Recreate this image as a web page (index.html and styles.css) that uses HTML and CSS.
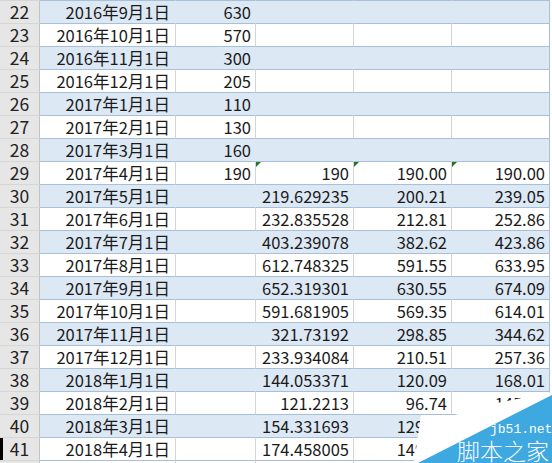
FILE: index.html
```html
<!DOCTYPE html>
<html lang="zh">
<head>
<meta charset="utf-8">
<title>Sheet</title>
<link rel="stylesheet" href="styles.css">
</head>
<body>
<div class="sheet">
  <div class="row blue"><div class="cell h">22</div><div class="cell a">2016年9月1日</div><div class="cell b">630</div><div class="cell c"></div><div class="cell d"></div><div class="cell e"></div></div>
  <div class="row"><div class="cell h">23</div><div class="cell a">2016年10月1日</div><div class="cell b">570</div><div class="cell c"></div><div class="cell d"></div><div class="cell e"></div></div>
  <div class="row blue"><div class="cell h">24</div><div class="cell a">2016年11月1日</div><div class="cell b">300</div><div class="cell c"></div><div class="cell d"></div><div class="cell e"></div></div>
  <div class="row"><div class="cell h">25</div><div class="cell a">2016年12月1日</div><div class="cell b">205</div><div class="cell c"></div><div class="cell d"></div><div class="cell e"></div></div>
  <div class="row blue"><div class="cell h">26</div><div class="cell a">2017年1月1日</div><div class="cell b">110</div><div class="cell c"></div><div class="cell d"></div><div class="cell e"></div></div>
  <div class="row"><div class="cell h">27</div><div class="cell a">2017年2月1日</div><div class="cell b">130</div><div class="cell c"></div><div class="cell d"></div><div class="cell e"></div></div>
  <div class="row blue"><div class="cell h">28</div><div class="cell a">2017年3月1日</div><div class="cell b">160</div><div class="cell c"></div><div class="cell d"></div><div class="cell e"></div></div>
  <div class="row"><div class="cell h">29</div><div class="cell a">2017年4月1日</div><div class="cell b">190</div><div class="cell c flag">190</div><div class="cell d flag">190.00</div><div class="cell e flag">190.00</div></div>
  <div class="row blue"><div class="cell h">30</div><div class="cell a">2017年5月1日</div><div class="cell b"></div><div class="cell c">219.629235</div><div class="cell d">200.21</div><div class="cell e">239.05</div></div>
  <div class="row"><div class="cell h">31</div><div class="cell a">2017年6月1日</div><div class="cell b"></div><div class="cell c">232.835528</div><div class="cell d">212.81</div><div class="cell e">252.86</div></div>
  <div class="row blue"><div class="cell h">32</div><div class="cell a">2017年7月1日</div><div class="cell b"></div><div class="cell c">403.239078</div><div class="cell d">382.62</div><div class="cell e">423.86</div></div>
  <div class="row"><div class="cell h">33</div><div class="cell a">2017年8月1日</div><div class="cell b"></div><div class="cell c">612.748325</div><div class="cell d">591.55</div><div class="cell e">633.95</div></div>
  <div class="row blue"><div class="cell h">34</div><div class="cell a">2017年9月1日</div><div class="cell b"></div><div class="cell c">652.319301</div><div class="cell d">630.55</div><div class="cell e">674.09</div></div>
  <div class="row"><div class="cell h">35</div><div class="cell a">2017年10月1日</div><div class="cell b"></div><div class="cell c">591.681905</div><div class="cell d">569.35</div><div class="cell e">614.01</div></div>
  <div class="row blue"><div class="cell h">36</div><div class="cell a">2017年11月1日</div><div class="cell b"></div><div class="cell c">321.73192</div><div class="cell d">298.85</div><div class="cell e">344.62</div></div>
  <div class="row"><div class="cell h">37</div><div class="cell a">2017年12月1日</div><div class="cell b"></div><div class="cell c">233.934084</div><div class="cell d">210.51</div><div class="cell e">257.36</div></div>
  <div class="row blue"><div class="cell h">38</div><div class="cell a">2018年1月1日</div><div class="cell b"></div><div class="cell c">144.053371</div><div class="cell d">120.09</div><div class="cell e">168.01</div></div>
  <div class="row"><div class="cell h">39</div><div class="cell a">2018年2月1日</div><div class="cell b"></div><div class="cell c">121.2213</div><div class="cell d">96.74</div><div class="cell e">145.70</div></div>
  <div class="row blue"><div class="cell h">40</div><div class="cell a">2018年3月1日</div><div class="cell b"></div><div class="cell c">154.331693</div><div class="cell d">129.92</div><div class="cell e">178.74</div></div>
  <div class="row"><div class="cell h sel">41</div><div class="cell a">2018年4月1日</div><div class="cell b"></div><div class="cell c">174.458005</div><div class="cell d">149.97</div><div class="cell e">198.95</div></div>
  <div class="row"><div class="cell h"></div><div class="cell a"></div><div class="cell b"></div><div class="cell c"></div><div class="cell d"></div><div class="cell e"></div></div>
</div>
<div class="watermark">
  <svg class="wm-shape" width="142" height="103" viewBox="0 0 142 103">
    <polygon points="4,103 11,55 45,55 82,44 142,32 142,103" fill="#ffffff"/>
    <polygon points="8,103 142,35 142,103" fill="#3ea8e0"/>
  </svg>
  <span class="wm-url">jb51.net</span>
  <span class="wm-name">脚本之家</span>
</div>
</body>
</html>
```
FILE: styles.css
```css
html, body {
  margin: 0;
  padding: 0;
  background: #ffffff;
  overflow: hidden;
}
body {
  width: 552px;
  height: 463px;
  position: relative;
  font-family: "Noto Sans CJK SC", "Noto Sans", sans-serif;
  font-size: 16.5px;
  color: #1a1a1a;
}
.sheet {
  display: flex;
  flex-direction: column;
}
.row {
  display: flex;
  height: 23px;
  flex: none;
}
.row:first-child {
  height: 24px;
}
.cell {
  box-sizing: border-box;
  height: 100%;
  display: flex;
  align-items: center;
  justify-content: flex-end;
  padding-right: 4px;
  border-bottom: 1px solid #a8bfda;
  border-right: 1px solid #d4d4d4;
  white-space: nowrap;
  position: relative;
  background: #ffffff;
  line-height: 20px;
}
.row:first-child .cell {
  border-top: 1px solid #a8bfda;
}
.row:first-child .cell.h {
  border-top-color: #d6d6d6;
}
.h {
  width: 40px;
  justify-content: center;
  padding-right: 0;
  background: #e6e6e6;
  border-right-color: #c4c4c4;
  border-bottom-color: #d6d6d6;
  color: #222222;
  font-size: 17.5px;
}
.sel {
  box-shadow: inset 3px 0 0 #000000;
}
.a { width: 136px; padding-right: 5px; }
.b { width: 80px; }
.c { width: 98px; }
.d { width: 98px; }
.e { width: 98px; border-right-color: #a8bfda; }
.row.blue .cell:not(.h) {
  background: #dde8f5;
  border-right-color: #dde8f5;
}
.row.blue .cell.e {
  border-right-color: #a8bfda;
}
.flag::before {
  content: "";
  position: absolute;
  left: 0;
  top: 0;
  border-top: 5px solid #1f7a1f;
  border-right: 5px solid transparent;
}
.watermark {
  position: absolute;
  right: 0;
  bottom: 0;
  width: 142px;
  height: 103px;
}
.wm-shape {
  position: absolute;
  left: 0;
  top: 0;
  display: block;
}
.wm-url {
  position: absolute;
  left: 80px;
  top: 63px;
  font-family: "Liberation Mono", "DejaVu Sans Mono", monospace;
  font-size: 13px;
  line-height: 14px;
  color: #ffffff;
}
.wm-name {
  position: absolute;
  left: 47px;
  top: 75px;
  font-family: "Noto Sans CJK SC", sans-serif;
  font-size: 23px;
  line-height: 30px;
  color: #ffffff;
  font-weight: 300;
}
```
